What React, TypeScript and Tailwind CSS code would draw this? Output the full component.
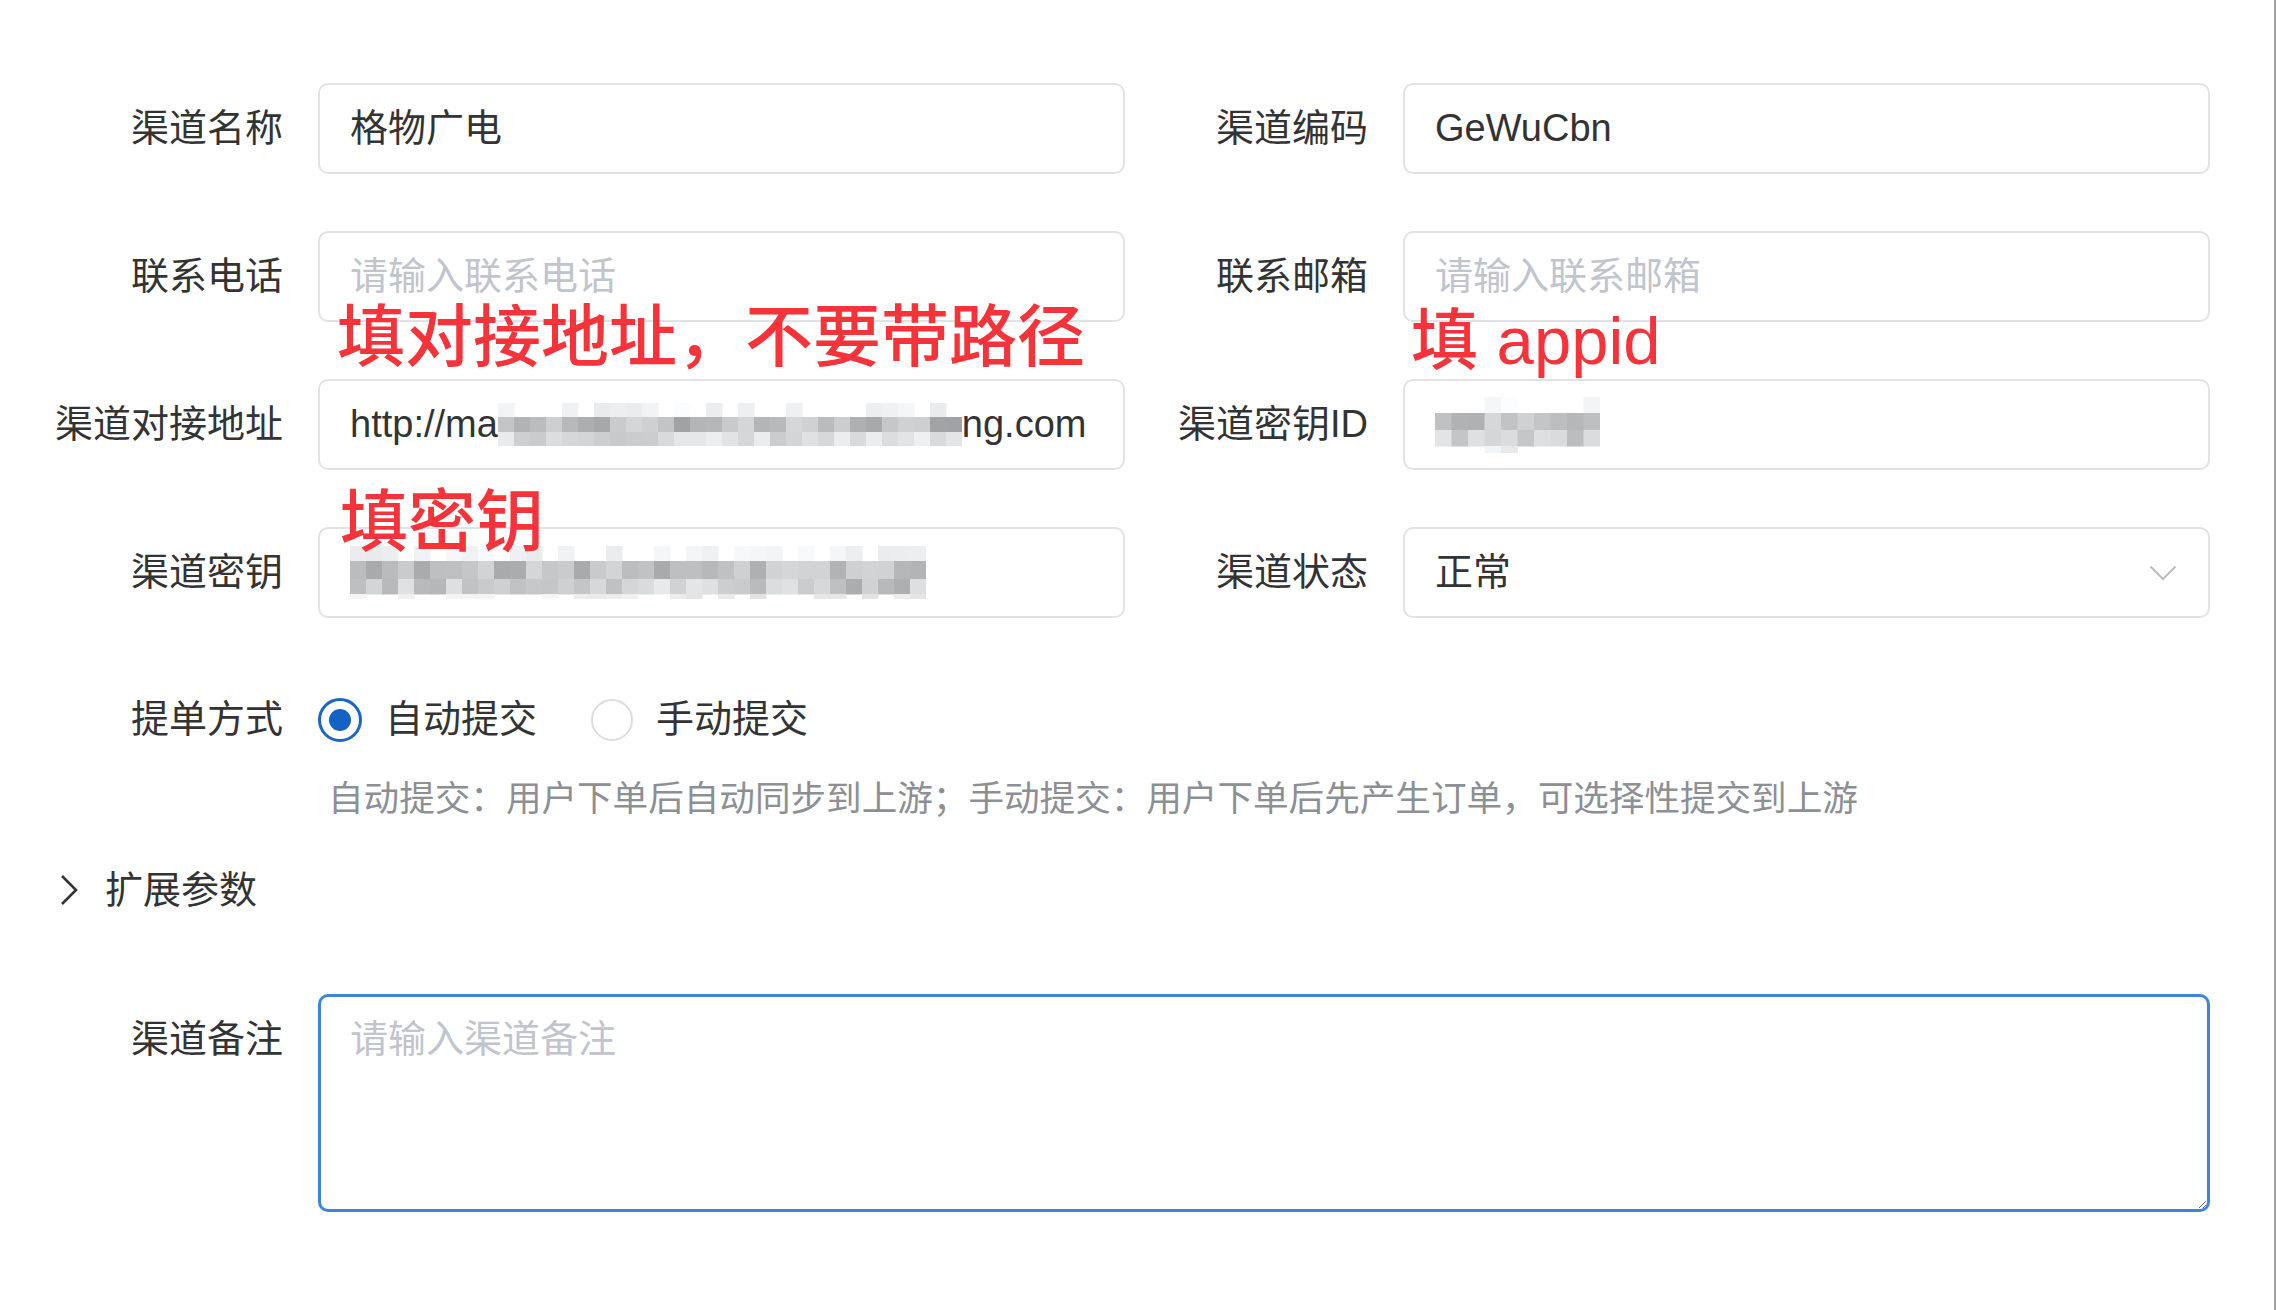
import React from 'react';

type MosaicRow = { h: number; lo: number; hi: number; skip?: number };

// pixelated patch standing in for the masked values
const Mosaic: React.FC<{ cols: number; cell: number; rows: MosaicRow[]; seed: number }> = ({ cols, cell, rows, seed }) => {
  let s = seed;
  const rand = () => {
    s = (s * 9301 + 49297) % 233280;
    return s / 233280;
  };
  const rects: React.ReactNode[] = [];
  let y = 0;
  rows.forEach((r, ri) => {
    for (let c = 0; c < cols; c++) {
      const v = rand();
      const g = Math.round(r.lo + rand() * (r.hi - r.lo));
      if (r.skip && v < r.skip) continue;
      rects.push(
        <rect key={`${ri}-${c}`} x={c * cell} y={y} width={cell + 0.5} height={r.h + 0.5} fill={`rgb(${g},${g + 1},${g + 3})`} />
      );
    }
    y += r.h;
  });
  return (
    <svg width={cols * cell} height={y} className="block shrink-0 blur-[0.6px]">
      {rects}
    </svg>
  );
};

const Item: React.FC<{ label: string; children: React.ReactNode }> = ({ label, children }) => (
  <div className="flex items-start">
    <label className="w-[278px] shrink-0 pr-[35px] text-right text-[38px] leading-[91px] text-[#333]">{label}</label>
    {children}
  </div>
);

const Box: React.FC<{ children: React.ReactNode }> = ({ children }) => (
  <div className="flex h-[91px] w-[807px] items-center overflow-hidden rounded-[10px] border-2 border-[#e1e2e7] px-[30px] text-[38px] text-[#333]">
    {children}
  </div>
);

const TextInput: React.FC<{ placeholder: string }> = ({ placeholder }) => (
  <input
    readOnly
    placeholder={placeholder}
    className="h-[91px] w-[807px] rounded-[10px] border-2 border-[#e1e2e7] px-[30px] text-[38px] text-[#333] outline-none placeholder:text-[#c0c4cc]"
  />
);

const Radio: React.FC<{ checked?: boolean; label: string }> = ({ checked, label }) => (
  <div className="flex items-center">
    {checked ? (
      <span className="flex h-[44px] w-[44px] items-center justify-center rounded-full border-[3px] border-[#1a65c6]">
        <span className="h-[22px] w-[22px] rounded-full bg-[#1463c4]" />
      </span>
    ) : (
      <span className="h-[42px] w-[42px] rounded-full border-2 border-[#dcdde2]" />
    )}
    <span className="ml-[23px] text-[38px] text-[#333]">{label}</span>
  </div>
);

export default function App() {
  return (
    <div className="relative min-h-[1310px] w-full border-r-2 border-[#a3a3a3] bg-white font-['Liberation_Sans','Noto_Sans_CJK_SC',sans-serif]">
      <div className="pl-[40px] pt-[83px]">
        <div className="grid grid-cols-[1085px_1085px] gap-y-[57px]">
          <Item label="渠道名称">
            <Box>格物广电</Box>
          </Item>
          <Item label="渠道编码">
            <Box>GeWuCbn</Box>
          </Item>
          <Item label="联系电话">
            <TextInput placeholder="请输入联系电话" />
          </Item>
          <Item label="联系邮箱">
            <TextInput placeholder="请输入联系邮箱" />
          </Item>
          <Item label="渠道对接地址">
            <Box>
              <span>http://ma</span>
              <Mosaic
                cols={29}
                cell={16}
                seed={7}
                rows={[
                  { h: 14, lo: 232, hi: 252, skip: 0.45 },
                  { h: 15, lo: 160, hi: 215 },
                  { h: 14, lo: 200, hi: 240 },
                ]}
              />
              <span>ng.com</span>
            </Box>
          </Item>
          <Item label="渠道密钥ID">
            <Box>
              <Mosaic
                cols={10}
                cell={16.5}
                seed={31}
                rows={[
                  { h: 16, lo: 236, hi: 252, skip: 0.5 },
                  { h: 17, lo: 175, hi: 215 },
                  { h: 16, lo: 175, hi: 228 },
                  { h: 7, lo: 228, hi: 248, skip: 0.4 },
                ]}
              />
            </Box>
          </Item>
          <Item label="渠道密钥">
            <Box>
              <Mosaic
                cols={36}
                cell={16}
                seed={113}
                rows={[
                  { h: 15, lo: 232, hi: 250, skip: 0.4 },
                  { h: 18, lo: 168, hi: 215 },
                  { h: 15, lo: 170, hi: 232 },
                  { h: 5, lo: 226, hi: 246, skip: 0.5 },
                ]}
              />
            </Box>
          </Item>
          <Item label="渠道状态">
            <Box>
              <span className="flex-1">正常</span>
              <svg width="28" height="16" viewBox="0 0 28 16" className="mr-[1px]">
                <polyline points="1.5,1.5 14,14 26.5,1.5" fill="none" stroke="#b9bcc2" strokeWidth="2" />
              </svg>
            </Box>
          </Item>
        </div>

        <div className="mt-[56px] flex h-[91px] items-center">
          <label className="w-[278px] shrink-0 pr-[35px] text-right text-[38px] text-[#333]">提单方式</label>
          <Radio checked label="自动提交" />
          <div className="ml-[54px]">
            <Radio label="手动提交" />
          </div>
        </div>

        <div className="mt-[17px] pl-[288px] text-[35.6px] leading-[35px] text-[#8c8f94]">
          自动提交：用户下单后自动同步到上游；手动提交：用户下单后先产生订单，可选择性提交到上游
        </div>

        <div className="mt-[43px] flex h-[60px] items-center">
          <svg width="20" height="32" viewBox="0 0 20 32" className="ml-[19px]">
            <polyline points="3,2 17,16 3,30" fill="none" stroke="#333" strokeWidth="2.6" />
          </svg>
          <span className="ml-[26px] text-[38px] text-[#333]">扩展参数</span>
        </div>

        <div className="mt-[74px] flex items-start">
          <label className="w-[278px] shrink-0 pr-[35px] text-right text-[38px] leading-[91px] text-[#333]">渠道备注</label>
          <textarea
            readOnly
            placeholder="请输入渠道备注"
            className="h-[218px] w-[1892px] rounded-[10px] border-[3px] border-[#3b86da] px-[29px] pt-[16px] text-[38px] leading-[52px] outline-none placeholder:text-[#c0c4cc]"
          />
        </div>
      </div>

      {/* red notes drawn on top of the form */}
      <div className="absolute left-[337px] top-[303px] text-[68px] font-medium leading-none text-[#f4333b]">
        填对接地址，不要带路径
      </div>
      <div className="absolute left-[1411px] top-[307px] text-[67px] font-medium leading-none text-[#f4333b]">
        填 appid
      </div>
      <div className="absolute left-[340px] top-[488px] text-[68px] font-medium leading-none text-[#f4333b]">
        填密钥
      </div>
    </div>
  );
}
